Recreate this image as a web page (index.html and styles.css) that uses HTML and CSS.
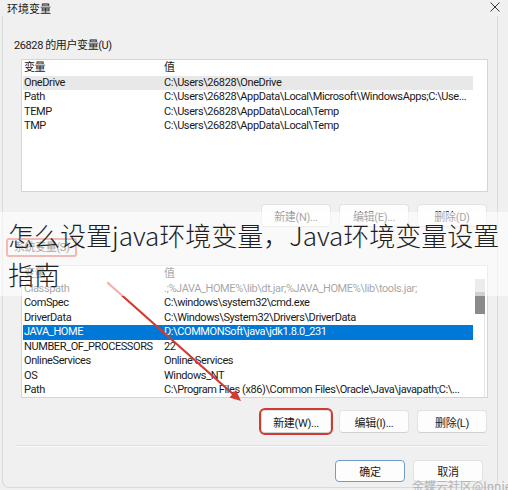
FILE: index.html
```html
<!DOCTYPE html>
<html lang="zh-CN">
<head>
<meta charset="utf-8">
<title>环境变量</title>
<link rel="stylesheet" href="styles.css">
</head>
<body>
<div class="window">
  <div class="titlebar">
    <span class="title">环境变量</span>
    <svg class="close" width="10" height="10" viewBox="0 0 10 10"><path d="M0.5 0.5 L9.5 9.5 M9.5 0.5 L0.5 9.5" stroke="#333" stroke-width="1" fill="none"/></svg>
  </div>
  <div class="frame">
    <div class="group-label">26828 的用户变量(U)</div>
    <div class="list">
      <div class="rows">
        <div class="row"><span>变量</span><span>值</span></div>
        <div class="row hover"><span>OneDrive</span><span>C:\Users\26828\OneDrive</span></div>
        <div class="row"><span>Path</span><span>C:\Users\26828\AppData\Local\Microsoft\WindowsApps;C:\Use...</span></div>
        <div class="row"><span>TEMP</span><span>C:\Users\26828\AppData\Local\Temp</span></div>
        <div class="row"><span>TMP</span><span>C:\Users\26828\AppData\Local\Temp</span></div>
      </div>
    </div>
    <div class="btn-row">
      <button class="btn">新建(N)...</button>
      <button class="btn">编辑(E)...</button>
      <button class="btn">删除(D)</button>
    </div>
    <div class="group-label2"><span class="marked">系统变量(S)</span></div>
    <div class="list">
      <div class="rows">
        <div class="row"><span>变量</span><span>值</span></div>
        <div class="row"><span>Classpath</span><span>.;%JAVA_HOME%\lib\dt.jar;%JAVA_HOME%\lib\tools.jar;</span></div>
        <div class="row"><span>ComSpec</span><span>C:\windows\system32\cmd.exe</span></div>
        <div class="row"><span>DriverData</span><span>C:\Windows\System32\Drivers\DriverData</span></div>
        <div class="row selected"><span>JAVA_HOME</span><span>D:\COMMONSoft\java\jdk1.8.0_231</span></div>
        <div class="row"><span>NUMBER_OF_PROCESSORS</span><span>22</span></div>
        <div class="row"><span>OnlineServices</span><span>Online Services</span></div>
        <div class="row"><span>OS</span><span>Windows_NT</span></div>
        <div class="row"><span>Path</span><span>C:\Program Files (x86)\Common Files\Oracle\Java\javapath;C:\...</span></div>
      </div>
      <div class="scrollbar"><div class="sb-top"></div><div class="sb-thumb"></div><div class="sb-track"></div></div>
    </div>
    <div class="btn-row">
      <button class="btn marked-btn">新建(W)...</button>
      <button class="btn">编辑(I)...</button>
      <button class="btn">删除(L)</button>
    </div>
    <div class="separator"></div>
    <div class="btn-row bottom">
      <button class="btn default">确定</button>
      <button class="btn">取消</button>
    </div>
  </div>
  <svg class="arrow" width="508" height="490" viewBox="0 0 508 490">
    <line x1="108" y1="283" x2="234" y2="395" stroke="#d43a2e" stroke-width="2.2" stroke-linecap="round"/>
    <polygon points="241,401 229.5,397.5 236,390" fill="#d43a2e"/>
  </svg>
  <div class="overlay">
    <div class="headline">怎么设置java环境变量，Java环境变量设置指南</div>
  </div>
  <div class="watermark">金蝶云社区@lnniem</div>
</div>
</body>
</html>
```
FILE: styles.css
```css
* { box-sizing: border-box; }
html, body { margin: 0; padding: 0; }
body {
  background: #f5f5f5;
  font-family: Roboto, "Noto Sans CJK SC", sans-serif;
  font-size: 11px;
  color: #1a1a1a;
}
.window {
  position: relative;
  width: 508px;
  height: 490px;
  overflow: hidden;
  background: #f0f0f0;
}
.titlebar {
  height: 16px;
  display: flex;
  align-items: center;
  justify-content: space-between;
  padding: 0 8px 0 7px;
}
.title {
  font-family: "Noto Sans CJK SC", sans-serif;
  font-size: 11px;
  line-height: 16px;
  color: #1a1a1a;
}
.close { display: block; margin-top: -2px; }
.frame {
  margin-left: 2px;
  width: 496px;
  height: 472px;
  border-left: 1px solid #dadada;
  border-right: 1px solid #dadada;
  border-bottom: 1px solid #dadada;
  border-radius: 0 0 7px 7px;
  display: flex;
  flex-direction: column;
}
.group-label {
  margin-top: 22px;
  padding-left: 11px;
  line-height: 16px;
  height: 16px;
  letter-spacing: -0.4px;
}
.group-label2 {
  margin-top: 11px;
  padding-left: 3px;
  height: 19px;
  display: flex;
}
.marked {
  border: 2px solid #d9534a;
  border-radius: 3px;
  padding: 0 6px;
  line-height: 15px;
  letter-spacing: -0.4px;
}
.list {
  margin: 5px 0 0 18px;
  width: 467px;
  height: 133px;
  background: #fff;
  border: 1px solid #d5d5d5;
  display: flex;
}
.group-label2 + .list { margin-top: 8px; }
.rows {
  flex: 1;
  padding: 1px 0 0 1px;
}
.row {
  display: grid;
  grid-template-columns: 140px 1fr;
  height: 14.5px;
  line-height: 14.5px;
  padding-left: 1px;
  width: 450px;
  white-space: nowrap;
  overflow: hidden;
  letter-spacing: -0.4px;
}
.row.hover { background: #e8e8e8; }
.row.selected { background: #0078d7; color: #fff; }
.scrollbar {
  width: 10px;
  margin: 13px 2px 0 0;
  display: flex;
  flex-direction: column;
}
.sb-top { height: 13px; background: #cfcfcf; }
.sb-thumb { height: 22px; background: #8a8a8a; }
.sb-track { flex: 1; border-right: 1px solid #e6e6e6; }
.btn-row {
  display: flex;
  justify-content: flex-end;
  gap: 8px;
  padding-right: 10px;
  margin-top: 12px;
}
.btn {
  width: 70px;
  height: 23px;
  padding: 0;
  font-family: Roboto, "Noto Sans CJK SC", sans-serif;
  font-size: 11px;
  letter-spacing: -0.3px;
  color: #1a1a1a;
  background: #fdfdfd;
  border: 1px solid #e2e2e2;
  border-bottom-color: #d0d0d0;
  border-radius: 4px;
}
.marked-btn {
  outline: 2px solid #cf3b31;
  outline-offset: 0;
}
.separator {
  margin: 12px 10px 0 13px;
  height: 2px;
  border-top: 1px solid #e0e0e0;
  border-bottom: 1px solid #fafafa;
}
.btn-row.bottom {
  margin-top: 13px;
  padding-right: 14px;
}
.btn-row.bottom .btn { height: 22px; }
.btn.default { border: 1px solid #6f9ccc; }
.arrow {
  position: absolute;
  left: 0;
  top: 0;
  pointer-events: none;
}
.overlay {
  position: absolute;
  left: 0;
  top: 212px;
  width: 508px;
  height: 84px;
  background: rgba(255, 255, 255, 0.6);
  padding: 3px 0 0 8px;
}
.headline {
  font-family: "Noto Sans CJK SC", sans-serif;
  font-weight: 300;
  font-size: 26px;
  line-height: 39px;
  color: #1f1f1f;
}
.watermark {
  position: absolute;
  left: 412px;
  top: 477px;
  font-family: "Noto Sans CJK SC", sans-serif;
  font-size: 12px;
  color: #b4b4b4;
  white-space: nowrap;
}
```
